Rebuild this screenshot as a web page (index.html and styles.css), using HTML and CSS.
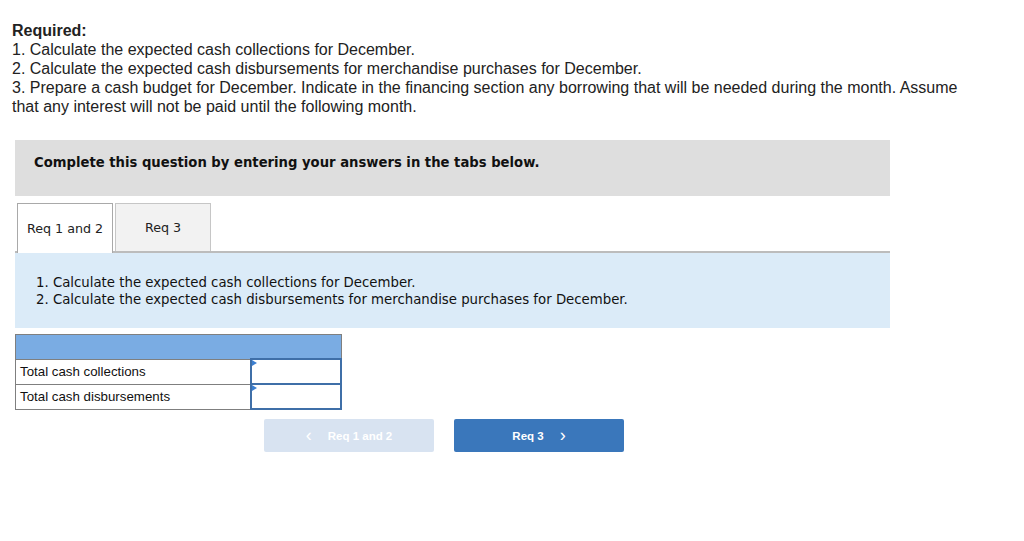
FILE: index.html
```html
<!DOCTYPE html>
<html>
<head>
<meta charset="utf-8">
<link rel="stylesheet" href="styles.css">
</head>
<body>
<div class="page">
  <div class="required">
    <div class="req-title">Required:</div>
    <div>1. Calculate the expected cash collections for December.</div>
    <div>2. Calculate the expected cash disbursements for merchandise purchases for December.</div>
    <div>3. Prepare a cash budget for December. Indicate in the financing section any borrowing that will be needed during the month. Assume that any interest will not be paid until the following month.</div>
  </div>

  <div class="panel">
    <div class="instruction">Complete this question by entering your answers in the tabs below.</div>

    <div class="tabs">
      <div class="tab active">Req 1 and 2</div>
      <div class="tab">Req 3</div>
    </div>

    <div class="task">
      <div>1. Calculate the expected cash collections for December.</div>
      <div>2. Calculate the expected cash disbursements for merchandise purchases for December.</div>
    </div>

    <table class="grid">
      <tr class="head"><td colspan="2"></td></tr>
      <tr><td class="label">Total cash collections</td><td class="input"><span class="flag"></span></td></tr>
      <tr><td class="label">Total cash disbursements</td><td class="input"><span class="flag"></span></td></tr>
    </table>

    <div class="nav">
      <div class="btn prev"><span class="chev">&lsaquo;</span><span>Req 1 and 2</span></div>
      <div class="btn next"><span>Req 3</span><span class="chev">&rsaquo;</span></div>
    </div>
  </div>
</div>
</body>
</html>
```

FILE: styles.css
```css
html, body {
  margin: 0;
  padding: 0;
  background: #fff;
}

.page {
  padding: 21px 0 0 12px;
  width: 975px;
}

.required {
  font-family: "Liberation Sans", Arial, sans-serif;
  font-size: 16px;
  line-height: 19px;
  color: #222;
}

.req-title {
  font-weight: 700;
}

.panel {
  margin-left: 3px;
  width: 875px;
  margin-top: 24px;
}

.instruction {
  background: #dedede;
  height: 56px;
  box-sizing: border-box;
  padding: 15px 0 0 19px;
  font-family: "DejaVu Sans", Verdana, sans-serif;
  font-weight: 700;
  font-size: 13.2px;
  color: #111;
}

.tabs {
  display: flex;
  gap: 2px;
  margin-top: 7px;
  padding-left: 2px;
  border-bottom: 2px solid #bcbcbc;
}

.tab {
  width: 94px;
  height: 47px;
  border: 1px solid #c6c6c6;
  border-bottom: none;
  background: #f2f2f2;
  display: flex;
  align-items: center;
  justify-content: center;
  font-family: "DejaVu Sans", Verdana, sans-serif;
  font-size: 12.7px;
  color: #222;
}

.tab.active {
  background: #fff;
  border-color: #a9a9a9;
  height: 49px;
  margin-bottom: -2px;
}

.task {
  background: #dbebf8;
  height: 75px;
  box-sizing: border-box;
  padding: 21px 0 0 21px;
  font-family: "DejaVu Sans", Verdana, sans-serif;
  font-size: 13.3px;
  line-height: 17px;
  color: #111;
}

.grid {
  margin-top: 6px;
  border-collapse: collapse;
  width: 327px;
  font-family: "Liberation Sans", Arial, sans-serif;
  font-size: 13.3px;
  color: #111;
}

.grid td {
  border: 1px solid #7f7f7f;
  height: 23px;
  padding: 0;
}

.grid .head td {
  background: #7aace3;
  height: 23px;
}

.grid .label {
  width: 230px;
  padding-left: 4px;
}

.grid .input {
  position: relative;
  border: 2px solid #3f6fa8;
  background: #fff;
}

.flag {
  position: absolute;
  left: 0;
  top: 0;
  width: 0;
  height: 0;
  border-left: 5px solid #3b7fd1;
  border-top: 3px solid transparent;
  border-bottom: 3px solid transparent;
}

.nav {
  display: flex;
  gap: 20px;
  margin-top: 9px;
  padding-left: 249px;
}

.btn {
  width: 170px;
  height: 33px;
  border-radius: 2px;
  display: flex;
  align-items: center;
  justify-content: center;
  gap: 16px;
  font-family: "Liberation Sans", Arial, sans-serif;
  font-weight: 700;
  font-size: 11.5px;
  color: #fff;
}

.btn.prev {
  background: #d8e3f1;
}

.btn.next {
  background: #3a77bb;
}

.chev {
  font-size: 18px;
  font-weight: 400;
  line-height: 1;
  margin-top: -2px;
}
```
